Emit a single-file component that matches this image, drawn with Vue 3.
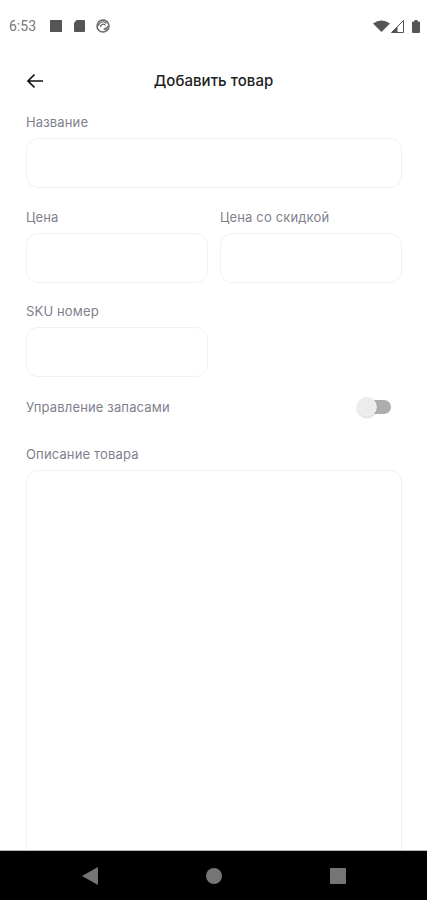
<script setup>
const rowOne = [
  { label: 'Цена' },
  { label: 'Цена со скидкой' },
]
</script>

<template>
  <div class="screen">
    <div class="status">
      <span class="time">6:53</span>
      <div class="status-left">
        <svg width="12" height="12" viewBox="0 0 12 12"><rect width="12" height="12" fill="#555" /></svg>
        <svg width="12" height="12" viewBox="0 0 12 12"><path d="M3.500 0H11a1 1 0 0 1 1 1v10a1 1 0 0 1-1 1H2a1 1 0 0 1-1-1V3z" fill="#555" /></svg>
        <svg width="14" height="14" viewBox="0 0 14 14" fill="none" stroke="#666"><circle cx="7" cy="7" r="6" stroke-width="1.500" /><path d="M2.500 7a4.500 4.500 0 0 1 8-2.500M4.500 8a2.700 2.700 0 0 1 5-1.500M11.500 7a4.500 4.500 0 0 1-3 4M9.500 8.500a2.500 2.500 0 0 1-2 2" stroke-width="1.200" /></svg>
      </div>
      <div class="status-right">
        <svg width="17" height="12" viewBox="0 0 17 12"><path d="M0 3.500Q8.500-2.500 17 3.500L8.500 12z" fill="#555" /></svg>
        <svg class="signal" width="13" height="13" viewBox="0 0 13 13"><path d="M12.500 .5V12.500H.5z" fill="none" stroke="#555" /><path d="M6.500 12.500V6.500L.5 12.500z" fill="#555" /></svg>
        <svg width="8" height="13" viewBox="0 0 8 13"><path d="M2.500 0h3v1.500H7a1 1 0 0 1 1 1V12a1 1 0 0 1-1 1H1a1 1 0 0 1-1-1V2.500a1 1 0 0 1 1-1h1.500z" fill="#555" /></svg>
      </div>
    </div>

    <div class="header">
      <svg class="back" width="17" height="16" viewBox="0 0 17 16" fill="none" stroke="#111" stroke-width="1.700"><path d="M17 8H2M8.500 1.500 2 8l6.500 6.500" /></svg>
      <h1 class="title">Добавить товар</h1>
    </div>

    <main class="form">
      <div class="field">
        <label class="label">Название</label>
        <div class="box"></div>
      </div>
      <div class="two">
        <div v-for="f in rowOne" :key="f.label" class="field">
          <label class="label">{{ f.label }}</label>
          <div class="box"></div>
        </div>
      </div>
      <div class="two single">
        <div class="field">
          <label class="label">SKU номер</label>
          <div class="box"></div>
        </div>
      </div>
      <div class="toggle-row">
        <span class="label">Управление запасами</span>
        <div class="switch"><span class="thumb"></span></div>
      </div>
      <div class="field desc">
        <label class="label">Описание товара</label>
        <div class="box big"></div>
      </div>
    </main>

    <nav class="nav">
      <svg width="16" height="18" viewBox="0 0 16 18"><path d="M16 0V18L0 9z" fill="#757575" /></svg>
      <svg width="16" height="16" viewBox="0 0 16 16"><circle cx="8" cy="8" r="8" fill="#757575" /></svg>
      <svg width="16" height="16" viewBox="0 0 16 16"><rect width="16" height="16" rx="1" fill="#757575" /></svg>
    </nav>
  </div>
</template>

<style scoped>
.screen {
  width: 427px;
  height: 900px;
  display: flex;
  flex-direction: column;
  overflow: hidden;
  background: #fff;
  font-family: Inter, "Noto Sans", sans-serif;
}
.status {
  height: 52px;
  flex: none;
  display: flex;
  align-items: center;
  padding: 0 7px 0 9px;
}
.time {
  font-family: Roboto, sans-serif;
  font-size: 14px;
  color: #777;
  width: 41px;
}
.status-left {
  display: flex;
  align-items: center;
  gap: 11px;
  flex: 1;
}
.status-right {
  display: flex;
  align-items: center;
  gap: 1px;
}
.signal {
  margin-right: 7px;
}
.header {
  height: 58px;
  flex: none;
  position: relative;
  display: flex;
  align-items: center;
  justify-content: center;
  padding-bottom: 1px;
  box-sizing: border-box;
}
.back {
  position: absolute;
  left: 26px;
  top: 21px;
}
.title {
  margin: 0;
  font-size: 15px;
  font-weight: 500;
  letter-spacing: 0.05px;
  color: #222;
}
.form {
  flex: 1;
  min-height: 0;
  overflow: hidden;
  padding: 3px 25px 0 26px;
}
.field {
  display: flex;
  flex-direction: column;
  gap: 7px;
  flex: 1 1 0;
  min-width: 0;
}
.label {
  font-size: 13px;
  line-height: 18px;
  letter-spacing: 0.15px;
  color: #7f7f8e;
}
.box {
  height: 50px;
  box-sizing: border-box;
  border: 1px solid #f1f1f3;
  border-radius: 12px;
}
.two {
  display: flex;
  gap: 12px;
  margin-top: 20px;
}
.two.single {
  margin-top: 19px;
}
.single .field {
  flex: 0 0 182px;
}
.toggle-row {
  display: flex;
  align-items: center;
  justify-content: space-between;
  height: 24px;
  margin-top: 18px;
  padding-right: 11px;
}
.switch {
  width: 33px;
  height: 14px;
  border-radius: 7px;
  background: #adadad;
  position: relative;
}
.thumb {
  position: absolute;
  left: -1px;
  top: -3px;
  width: 20px;
  height: 20px;
  border-radius: 50%;
  background: #ececec;
  box-shadow: 0 1px 2px rgba(0, 0, 0, 0.18);
}
.desc {
  margin-top: 26px;
  flex: none;
}
.big {
  height: 520px;
}
.nav {
  height: 50px;
  flex: none;
  background: #000;
  border-top: 1px solid #bbb;
  box-sizing: border-box;
  display: flex;
  align-items: center;
  gap: 108px;
  padding-left: 82px;
}
</style>
